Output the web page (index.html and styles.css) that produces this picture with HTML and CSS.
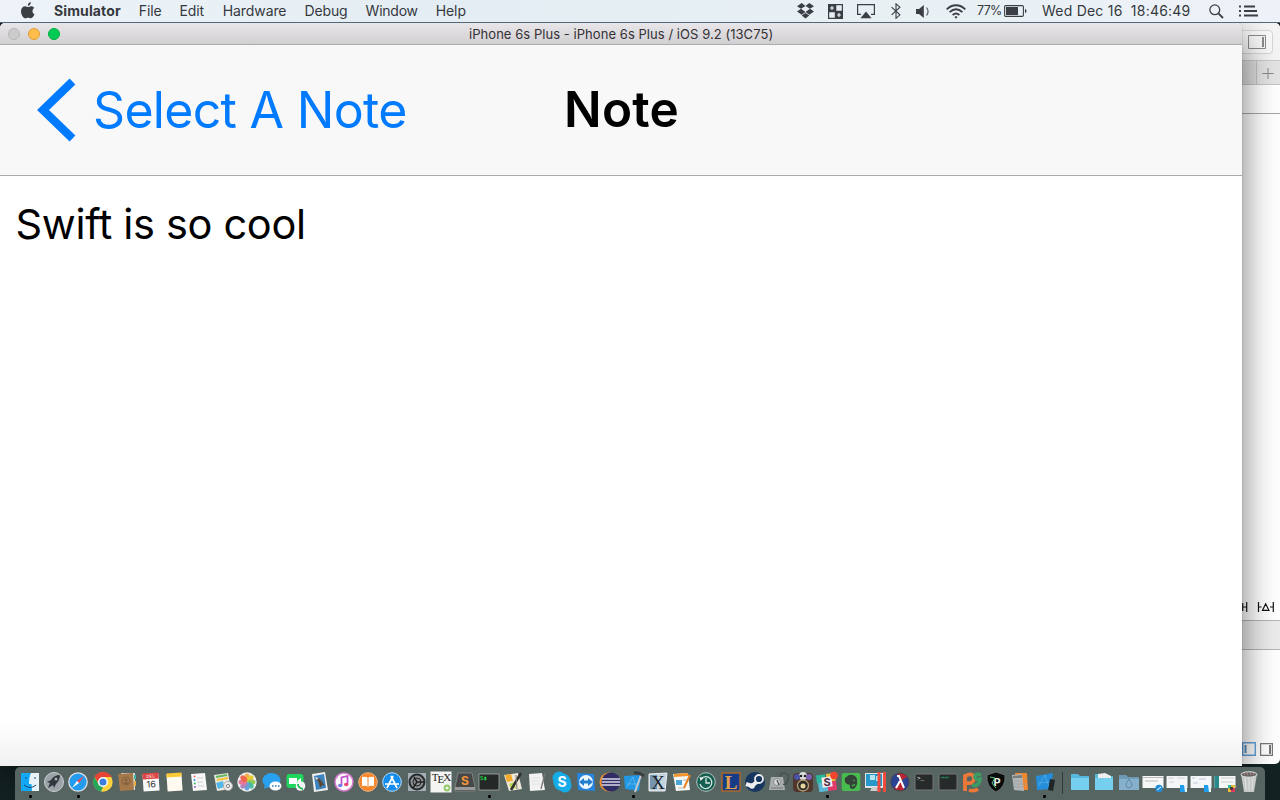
FILE: index.html
```html
<!DOCTYPE html>
<html lang="en">
<head>
<meta charset="utf-8">
<title>Simulator</title>
<link rel="stylesheet" href="styles.css">
</head>
<body>
<header class="menubar">
  <nav class="menus">
    <svg class="apple" width="14" height="17" viewBox="0 0 14 17"><path fill="#3b3f44" d="M9.8 0C8 .3 6.700 2 6.900 3.900 8.700 3.800 9.900 2 9.800 0zM7.200 5C6.500 5 5.500 4.200 4.200 4.200 1.800 4.200 0 6.200 0 9.200 0 12.800 2.400 16.300 4.300 16.300c1 0 1.600-.6 2.800-.6s1.700.6 2.800.6c1.600 0 3-2.400 3.600-4.200-2.600-1.200-2.600-4.900-.2-6.200C12.500 4.700 11.200 4.200 10.100 4.200 8.900 4.200 8 5 7.200 5z"/></svg>
    <span class="m app">Simulator</span><span class="m file">File</span><span class="m edit">Edit</span><span class="m hardware">Hardware</span><span class="m debug">Debug</span><span class="m window-menu">Window</span><span class="m">Help</span>
  </nav>
  <div class="status">
    <svg width="17" height="16" viewBox="0 0 17 16" fill="#3b3f44"><path d="M4.700 0 8.500 2.900 4 5.800 0 3.200zM12.300 0 8.500 2.900 13 5.800 17 3.200zM0 8.400 4 5.800 8.500 8.900 4.700 11.700zM17 8.400 13 5.800 8.500 8.900 12.300 11.700zM4.700 12.600 8.500 9.900 12.300 12.600 8.500 15.500z"/></svg>
    <svg class="s2" width="15" height="15" viewBox="0 0 15 15"><path fill="#3b3f44" d="M0 0h15v15H0z"/><path fill="#e6eef4" d="M8.300 1.200h5.500v5.600H8.300zM1.200 8.300h5.600v5.500H1.200z"/><path stroke="#e6eef4" stroke-width="1.200" d="M2 4h4M4 2v4M9 11h4M11 9v4"/></svg>
    <svg class="s3" width="18" height="15" viewBox="0 0 18 15"><path fill="none" stroke="#3b3f44" stroke-width="1.200" d="M4 10.400H.6V.6h16.800v9.800H14"/><path fill="#3b3f44" d="M9 7.500l5.500 6.800h-11z"/></svg>
    <svg class="s4" width="10" height="16" viewBox="0 0 10 16"><path fill="none" stroke="#3b3f44" stroke-width="1.100" d="M.6 4.200l8.300 7.600L5 15.300V.8l3.900 3.400-8.300 7.600"/></svg>
    <svg class="s5" width="13" height="13" viewBox="0 0 13 13"><path fill="#3b3f44" d="M0 4h3l4.800-4v13L3 9H0z"/><path fill="none" stroke="#596067" stroke-width="1.200" d="M10.500 2.500c2 2.500 2 5.500 0 8"/></svg>
    <svg class="s6" width="20" height="15" viewBox="0 0 20 15" fill="none" stroke="#3b3f44" stroke-width="1.800"><path d="M.7 5.300c5.500-5.400 13.100-5.400 18.600 0M3.600 8.200c4-3.700 8.800-3.700 12.800 0M6.600 11c2.200-1.900 4.600-1.900 6.800 0"/><circle cx="10" cy="13.300" r=".8" fill="#3b3f44" stroke-width="1"/></svg>
    <span class="pct">77%</span>
    <svg class="batt" width="23" height="12" viewBox="0 0 23 12"><rect x=".6" y=".6" width="18.800" height="10.800" rx="1.200" fill="none" stroke="#3b3f44" stroke-width="1.100"/><path fill="#3b3f44" d="M2 2h12v8H2zM21 3.800c2 .8 2 3.600 0 4.400z"/></svg>
    <span class="clock">Wed Dec 16&nbsp; 18:46:49</span>
    <svg class="search" width="15" height="15" viewBox="0 0 15 15" fill="none" stroke="#3b3f44" stroke-width="1.300"><circle cx="5.800" cy="5.800" r="4.900"/><path stroke-width="1.800" d="M9.400 9.400l4.600 4.600"/></svg>
    <svg class="list" width="19" height="12" viewBox="0 0 19 12"><path stroke="#3b3f44" stroke-width="2" d="M0 1.500h2M5 1.500h11M0 6h2M5 6h13M0 10.500h2M5 10.500h14"/></svg>
  </div>
</header>

<section class="xcode-window">
  <div class="x-toolbar"><span class="x-button"><svg width="18" height="14" viewBox="0 0 18 14"><path fill="none" stroke="#8c8c8c" d="M.5.5h17v13H.5z"/><path fill="#8c8c8c" d="M14 2h2v10h-2z"/></svg></span></div>
  <div class="x-tabs"><svg width="12" height="12" viewBox="0 0 12 12"><path stroke="#888" d="M.5 6.500h11M6 1v11"/></svg></div>
  <div class="x-jump"></div>
  <div class="x-canvas"><svg width="38" height="12" viewBox="0 0 38 12" fill="none" stroke="#111" stroke-width="1.200"><path d="M.7 2v8M1 6h3.500M4.700 1v10M16.500 1v10M16.500 6h3M20.500 9.300l3.200-6.500 3.200 6.500zM28 6h3M31.300 1v10"/></svg></div>
  <div class="x-debug"></div>
  <div class="x-bottom">
    <svg width="14" height="14" viewBox="0 0 14 14"><path fill="none" stroke="#63a2de" stroke-width="1.500" d="M.7.700h12.600v12.600H.7z"/><path stroke="#568fc5" stroke-width="2" d="M3.500 3v8"/></svg>
    <svg width="13" height="13" viewBox="0 0 13 13"><path fill="none" stroke="#777" stroke-width="1.200" d="M.6.600h11.800v11.800H.6z"/><path stroke="#777" stroke-width="2" d="M10 2v9"/></svg>
  </div>
</section>

<main class="simulator">
  <div class="titlebar"><i class="light gray"></i><i class="light amber"></i><i class="light green"></i><span class="title">iPhone 6s Plus - iPhone 6s Plus / iOS 9.2 (13C75)</span></div>
  <div class="navbar">
    <div class="back"><svg width="39" height="64" viewBox="0 0 39 64"><path fill="none" stroke="#007aff" stroke-width="8.300" d="M35.500 3.500 6 32l29.500 28.500"/></svg><span class="back-label">Select A Note</span></div>
    <h1 class="nav-title">Note</h1>
  </div>
  <p class="note">Swift is so cool</p>
</main>

<footer class="dock">
  <span class="item running"><svg viewBox="0 0 24 24"><path fill="#12a8f5" d="M3 3h18v18H3z"/><path fill="#e9f2f8" d="M13 3h8v18h-7l-.5-7H11q0-7 2-11z"/><path stroke="#174a73" d="M6 15q6 5 12 0M8 7v2M17 7v2"/></svg></span>
  <span class="item"><svg viewBox="0 0 24 24"><circle cx="12" cy="12" r="9.500" fill="#9ba3a8" stroke="#c9ced0"/><path fill="#31383d" d="M18 5q-6 0-9 5l-4 2 3 1-2 5 5-3 1 3 2-4q4-4 4-9z"/><circle cx="14" cy="9" r="1.500" fill="#aaa"/></svg></span>
  <span class="item running"><svg viewBox="0 0 24 24"><circle cx="12" cy="12" r="9.200" fill="#239cef" stroke="#dce1e5" stroke-width="1.300"/><path fill="#f44" d="M18 6l-7 5 2 2z"/><path fill="#fff" d="M6 18l5-7 2 2z"/></svg></span>
  <span class="item"><svg viewBox="0 0 24 24"><circle cx="12" cy="12" r="9.700" fill="#ffd23d"/><path fill="#e74436" d="M3.500 7a9.700 9.700 0 0 1 17 0H12l-4 7z"/><path fill="#26a65b" d="M3.500 7 8 15l4 2-2 4.500A9.700 9.700 0 0 1 3.500 7z"/><circle cx="12" cy="12" r="4.300" fill="#397fe0" stroke="#fff" stroke-width="1.500"/></svg></span>
  <span class="item"><svg viewBox="0 0 24 24"><path fill="#ddd" d="M6 3h14v17H6z"/><path fill="#3db6a3" d="M19 5h2v4h-2z"/><path fill="#e6ad3e" d="M19 11h2v5h-2z"/><path fill="#a5784a" d="M3 4l15-1 1 17-14 1z"/><circle cx="11" cy="11" r="4" fill="none" stroke="#866140"/><circle cx="11" cy="10" r="1.500" fill="#866140"/><path fill="#866140" d="M8 14q3-4 6 0z"/></svg></span>
  <span class="item"><svg viewBox="0 0 24 24"><g transform="rotate(-4 12 12)"><path fill="#fafafa" d="M4 4h16v17H4z"/><path fill="#df4545" d="M4 3h16v6H4z"/><text x="12" y="7.700" class="cal-month">DEC</text><text x="12" y="17.500" class="cal-day">16</text></g></svg></span>
  <span class="item"><svg viewBox="0 0 24 24"><g transform="rotate(-4 12 12)"><path fill="#fffaf0" d="M4 4h15v17H4z"/><path fill="#fac933" d="M4 3h15v4H4z"/></g></svg></span>
  <span class="item"><svg viewBox="0 0 24 24"><path fill="#f8f8f8" d="M4 4l14-1 2 17-14 1z"/><path stroke="#ccc" d="M10 8h6M10 12h6M11 16h6"/><circle cx="7.500" cy="6.500" r="1" fill="#e67"/><circle cx="7.500" cy="10" r="1" fill="#2b9be0"/><circle cx="7.800" cy="13.500" r="1" fill="#29c36a"/><circle cx="8" cy="17" r="1" fill="#a45dd1"/></svg></span>
  <span class="item"><svg viewBox="0 0 24 24"><path fill="#e8e8df" d="M3 5l14-2 3 16-14 2z"/><path fill="#52b8e8" d="M5 13l7-2 1 6-6 2z"/><path stroke="#f8bf38" stroke-width="2" d="M6 10l11-2"/><path stroke="#66b65d" stroke-width="2" d="M5 7l11-2"/><circle cx="17" cy="16" r="4.500" fill="#eee" stroke="#aaa"/><circle cx="17" cy="16" r="1.700" fill="none" stroke="#888"/></svg></span>
  <span class="item"><svg viewBox="0 0 24 24"><circle cx="12" cy="12" r="9.700" fill="#eee"/><g opacity=".9"><ellipse cx="12" cy="7.500" rx="2.600" ry="4" fill="#f5a335"/><ellipse cx="12" cy="7.500" rx="2.600" ry="4" fill="#e7ca22" transform="rotate(45 12 12)"/><ellipse cx="12" cy="7.500" rx="2.600" ry="4" fill="#8bc447" transform="rotate(90 12 12)"/><ellipse cx="12" cy="7.500" rx="2.600" ry="4" fill="#36b996" transform="rotate(135 12 12)"/><ellipse cx="12" cy="7.500" rx="2.600" ry="4" fill="#529bd8" transform="rotate(180 12 12)"/><ellipse cx="12" cy="7.500" rx="2.600" ry="4" fill="#a779b9" transform="rotate(225 12 12)"/><ellipse cx="12" cy="7.500" rx="2.600" ry="4" fill="#e66c91" transform="rotate(270 12 12)"/><ellipse cx="12" cy="7.500" rx="2.600" ry="4" fill="#ef583c" transform="rotate(315 12 12)"/></g></svg></span>
  <span class="item"><svg viewBox="0 0 24 24"><ellipse cx="11.500" cy="10.500" rx="9" ry="7.500" fill="#28a2ee"/><path fill="#28a2ee" d="M5 14l-1 5 6-3z"/><ellipse cx="15.500" cy="16" rx="6" ry="4.600" fill="#fff"/><path stroke="#277ab4" stroke-width="1.600" stroke-dasharray="1.500 1.500" d="M12 16h8"/></svg></span>
  <span class="item"><svg viewBox="0 0 24 24"><rect x="2.500" y="4" width="17" height="14" rx="3" fill="#1fd65c"/><path fill="#fff" d="M5 8h8v6H5zM13 11l4-3v6z"/><circle cx="16.500" cy="16" r="4.800" fill="#f5f5f5"/><path stroke="#22bd56" stroke-width="1.800" d="M14 14q0 4 5 5"/></svg></span>
  <span class="item"><svg viewBox="0 0 24 24"><path fill="#eee" d="M4 4l13-2 3 18-14 2z"/><path fill="#3d83bd" d="M6 6l10-2 2 14-10 2z"/><path fill="#5b4535" d="M7 7l5 2 5 7-3-1-2 3-1-5z"/><path fill="#fff" d="M7 7l3 1-1 2z"/></svg></span>
  <span class="item"><svg viewBox="0 0 24 24"><circle cx="12" cy="12" r="9" fill="#fbfbfb" stroke="#d77bcf" stroke-width="1.500"/><path stroke="#c14fc9" stroke-width="1.700" d="M9.500 15V7.500l6-1.500v8"/><ellipse cx="8.200" cy="15.500" rx="2.200" ry="1.800" fill="#777be8"/><ellipse cx="14.200" cy="14.500" rx="2.200" ry="1.800" fill="#ed4676"/></svg></span>
  <span class="item"><svg viewBox="0 0 24 24"><circle cx="12" cy="12" r="9.300" fill="#f8862c" stroke="#efb581"/><path fill="#fff" d="M6 7q4-1 6 1 2-2 6-1v9q-4-1-6 1-2-2-6-1z"/><path stroke="#ee8735" d="M12 8v9"/></svg></span>
  <span class="item"><svg viewBox="0 0 24 24"><circle cx="12" cy="12" r="9.300" fill="#168dec" stroke="#b5ddf7"/><path stroke="#fff" stroke-width="1.700" d="M7 18l6-12M11 6l6 12M5 14h14"/></svg></span>
  <span class="item"><svg viewBox="0 0 24 24"><path fill="#a3adb5" d="M3 3h18v18H3z"/><circle cx="12" cy="12" r="7.500" fill="#8a8f92" stroke="#282c2e" stroke-width="2"/><circle cx="12" cy="12" r="4" fill="none" stroke="#222"/><path stroke="#222" stroke-width="1.500" d="M12 12l-3-5M12 12h7M12 12l-4 6"/></svg></span>
  <span class="item"><svg viewBox="0 0 24 24"><path fill="#f4f5f2" d="M1.500 1.500h21v21h-21z"/><text x="12" y="11" class="tex">T<tspan dy="2">E</tspan><tspan dy="-2">X</tspan></text><circle cx="18" cy="18" r="2.500" fill="#e5f3d8" stroke="#94c66a" stroke-width="1.800"/></svg></span>
  <span class="item"><svg viewBox="0 0 24 24"><path fill="#474747" stroke="#8b8b8b" stroke-width=".8" d="M5 3h14l3 14v4H2v-4z"/><path fill="#9a9a9a" d="M2 17h20v3H2z"/><text x="12" y="14.500" class="letter sublime">S</text></svg></span>
  <span class="item running"><svg viewBox="0 0 24 24"><path fill="#242826" stroke="#a5aaa6" stroke-width=".8" d="M2 4h20v16H2z"/><text x="3" y="10" class="prompt green-text">$▮</text></svg></span>
  <span class="item"><svg viewBox="0 0 24 24"><path fill="#eee7d8" d="M3 5l14-2 4 16-13 2z"/><path fill="#f4ac2d" d="M4 5l6-1 2 7-6 1z"/><path fill="#b6d84d" d="M8 14l5-2 2 6-5 1z"/><path stroke="#303030" stroke-width="2.500" d="M20 3L10 20"/><path stroke="#777" d="M15 5l1 14"/></svg></span>
  <span class="item"><svg viewBox="0 0 24 24"><path fill="#f2f2f2" d="M4 4l13-1 3 17-15 1z"/><path stroke="#e2e2e2" d="M6 8h9M6 11h9M7 14h9"/><path stroke="#777" stroke-width="1.300" d="M20 3l-4 16"/></svg></span>
  <span class="item"><svg viewBox="0 0 24 24"><circle cx="9" cy="8" r="6.500" fill="#16ace8"/><circle cx="15" cy="16" r="6.500" fill="#16ace8"/><circle cx="12" cy="12" r="8.700" fill="#16ace8"/><text x="12" y="17" class="letter skype">S</text></svg></span>
  <span class="item"><svg viewBox="0 0 24 24"><path fill="#2584df" d="M3 3l17 1 1 17-17-1z"/><circle cx="12" cy="12" r="7" fill="#eff8ff"/><path fill="#237dce" d="M5 12l5-4v2.500h4V8l5 4-5 4v-2.500h-4V16z"/></svg></span>
  <span class="item"><svg viewBox="0 0 24 24"><circle cx="11" cy="12" r="9.500" fill="#eb9035"/><circle cx="13" cy="12" r="9.500" fill="#302c65"/><path stroke="#d8d7e9" stroke-width="1.500" d="M4 9h18M4 12h18M4 15h18"/></svg></span>
  <span class="item running"><svg viewBox="0 0 24 24"><path fill="#2297e3" d="M2 6l17-1-2 16-14-2z"/><path stroke="#63b9ee" stroke-width=".8" d="M5 17l6-10 3 10M5 14h10"/><path stroke="#c6c8c9" stroke-width="2" d="M19 5l-6 17"/><path stroke="#363c40" stroke-width="3" d="M12 3q5-1 10 3"/></svg></span>
  <span class="item"><svg viewBox="0 0 24 24"><path fill="#c4d4df" stroke="#eee" d="M3 4l18-1-2 18H3z"/><path fill="#7594ad" d="M4 5h7v14H4z"/><text x="12" y="18.500" class="letter x-letter">X</text></svg></span>
  <span class="item"><svg viewBox="0 0 24 24"><path fill="#f7f7f5" d="M3 4l15-1 2 17-14 1z"/><path fill="#f3942d" d="M4 4l14-1v3L4 7z"/><path fill="#4aa5da" d="M6 10h6v5H6z"/><path stroke="#bbb" d="M8 18h7M13 10h4"/><path stroke="#e88324" stroke-width="2" d="M20 5l-6 13"/></svg></span>
  <span class="item"><svg viewBox="0 0 24 24"><circle cx="12" cy="12" r="9.300" fill="#155f50" stroke="#b6c4c0"/><path stroke="#d8e6e1" stroke-width="1.300" d="M7 9a6 6 0 1 1-1 5M12 8v5h4"/><path fill="#eee" d="M5.500 7l4 1-3 3z"/></svg></span>
  <span class="item"><svg viewBox="0 0 24 24"><path fill="#163c88" stroke="#a9652d" stroke-width="1.500" d="M3 3h18v18H3z"/><text x="12" y="19" class="letter gold">L</text></svg></span>
  <span class="item"><svg viewBox="0 0 24 24"><circle cx="12" cy="12" r="10" fill="#17365f"/><path stroke="#eee" stroke-width="4" d="M3 14l6 2 7-6"/><circle cx="16" cy="9" r="4" fill="#17365f" stroke="#eee" stroke-width="1.800"/><circle cx="9" cy="16" r="2.800" fill="#eee"/></svg></span>
  <span class="item"><svg viewBox="0 0 24 24"><path fill="#a8adaf" d="M4 7h12l2 13H2z"/><circle cx="10" cy="12" r="3.500" fill="#d7dadb" stroke="#888"/><path stroke="#454b4c" stroke-width="1.200" d="M12 15l-2-5M13 7q0-5 5-4t3 7-5 4"/><path stroke="#777" d="M4 18h12"/></svg></span>
  <span class="item"><svg viewBox="0 0 24 24"><rect x="2" y="3" width="20" height="19" rx="4" fill="#50362c"/><circle cx="12" cy="6" r="4" fill="#ddd"/><circle cx="6" cy="7" r="3" fill="#4853a7"/><circle cx="18" cy="7" r="3" fill="#7960b2"/><circle cx="10" cy="6" r="1.300" fill="#222"/><circle cx="14" cy="6" r="1.300" fill="#222"/><circle cx="12" cy="15.500" r="5.500" fill="#302d29" stroke="#b3a178" stroke-width="1.300"/><circle cx="12" cy="16" r="2.500" fill="#ead6a0"/></svg></span>
  <span class="item running"><svg viewBox="0 0 24 24"><g transform="rotate(-8 12 12)"><path fill="#2bb89a" d="M2 4h9v8H2z"/><path fill="#eabb35" d="M12 4h9v8h-9z"/><path fill="#e33b69" d="M12 12h9v9h-9z"/><path fill="#5bb9d5" d="M3 12h9v9H3z"/><path fill="#f6eef2" d="M7 7h10v10H7z"/></g><text x="12" y="16" class="letter slack">S</text><circle cx="19" cy="5.500" r="3.800" fill="#f34432"/></svg></span>
  <span class="item"><svg viewBox="0 0 24 24"><rect x="2.700" y="3" width="18.600" height="18" rx="2" fill="#47bb4e"/><path fill="#344239" d="M6 8l4-3q6-1 8 4 1 8-4 10-4 0-3-4l-3-1q-3-2-2-6z"/><path stroke="#47bb4e" stroke-width="1.300" d="M13.500 16.500q0-2 2.500-1.500"/><circle cx="15" cy="10.500" r=".8" fill="#47bb4e"/></svg></span>
  <span class="item"><svg viewBox="0 0 24 24"><path fill="#e2e5e7" d="M1 3h19v15H1z"/><path fill="#2598cb" d="M2 4h16v12H2z"/><path fill="#b5e5ee" d="M6 5h5v5H6zM12 6h4v5h-4z"/><path fill="#ccc" d="M8 17h5l1 4H6z"/><path stroke="#ef4b3e" stroke-width="3" d="M15 2v20M20.500 2v20"/></svg></span>
  <span class="item"><svg viewBox="0 0 24 24"><circle cx="12" cy="12" r="9" fill="#b92530" stroke="#444"/><path fill="#294292" d="M9 3.500a9 9 0 0 0-3 15L12 12z"/><path fill="#294292" d="M16 20a9 9 0 0 0 3-13l-5 3z"/><path stroke="#fff" stroke-width="2" d="M9 6h2l5 12M12 11l-4 7"/></svg></span>
  <span class="item"><svg viewBox="0 0 24 24"><path fill="#262a2b" stroke="#777" d="M3 4h18v16H3z"/><text x="5" y="9.500" class="prompt">&gt;_</text></svg></span>
  <span class="item"><svg viewBox="0 0 24 24"><path fill="#262a2b" stroke="#777" d="M3 4h18v16H3z"/><path stroke="#248c58" stroke-width="1.500" stroke-dasharray="1.500 .5" d="M5 7.500h8"/></svg></span>
  <span class="item"><svg viewBox="0 0 24 24"><path stroke="#ee7837" stroke-width="3.800" d="M5 21V6q8-4 9 2 0 6-7 5"/><path stroke="#ee7837" stroke-width="3.500" d="M9 20q5 2 9-1"/><path stroke="#3d9c61" stroke-width="3.500" d="M21 5q-6-2-6 2 0 3 5 2-1 8-8 6"/></svg></span>
  <span class="item"><svg viewBox="0 0 24 24"><path fill="#090c0b" stroke="#7a827e" stroke-width=".7" d="M12 2l9 3q1 12-9 17Q2 17 3 5z"/><text x="13" y="16" class="letter shield">P</text><path stroke="#5dca75" d="M6 7l5 1-3 5 4 5"/></svg></span>
  <span class="item"><svg viewBox="0 0 24 24"><path fill="#f0872c" d="M7 3h12l1 17H8z"/><path fill="#b2b6b8" d="M4 5l10-1 2 17-10-1z"/><path fill="#777d80" d="M5 6l9-1v3H5z"/><path stroke="#989da0" stroke-width=".7" d="M6 11h8M6 14h9M6 17h9M16 9h3M16 14h3"/></svg></span>
  <span class="item running"><svg viewBox="0 0 24 24"><path fill="#258eda" d="M3 6l17-3-2 16-14 1z"/><path stroke="#62b5e9" stroke-width=".6" d="M6 16l6-11 4 12M5 13l13-1"/><path fill="#202527" d="M17 9l5 1-2 11-5-1z"/></svg></span>
  <span class="separator"></span>
  <span class="item"><svg viewBox="0 0 24 24"><path fill="#58b9df" d="M3 4h7l2 2h9v14H3z"/><path fill="#77cfef" d="M3 8h18v12H3z"/></svg></span>
  <span class="item"><svg viewBox="0 0 24 24"><path fill="#58b9df" d="M3 4h7l2 2h9v14H3z"/><path fill="#eee" d="M6 4l7-1 6 3v4H6z"/><path fill="#77cfef" d="M3 8h18v12H3z"/></svg></span>
  <span class="item"><svg viewBox="0 0 24 24"><path fill="#6d9ab8" d="M2 5h7l2 2h11v13H2z"/><path fill="#86b0cc" d="M2 9h20v11H2z"/><path stroke="#5d8aac" d="M12 9q-6 8 0 9 6-1 0-9z"/></svg></span>
  <span class="item"><svg viewBox="0 0 24 24"><path fill="#f7f7f7" d="M1.500 6h21v12h-21z"/><path stroke="#b8b8b8" d="M2 7.500h20M4 11h13"/><circle cx="18" cy="18.500" r="3.700" fill="#238edc"/><path stroke="#fff" d="M16 20l4-3"/></svg></span>
  <span class="item"><svg viewBox="0 0 24 24"><path fill="#f5f6f7" d="M1.500 6h21v12h-21z"/><path stroke="#c0ccd5" stroke-width=".8" d="M3 8h6M12 8h8M4 12h5"/><path fill="#209cec" d="M15 15h7v7h-7z"/><path fill="#e9f5fc" d="M19 15h3v7h-2z"/></svg></span>
  <span class="item"><svg viewBox="0 0 24 24"><path fill="#f5f6f7" d="M1.500 6h21v12h-21z"/><path stroke="#a8bfd8" stroke-width=".8" d="M3 8h3M10 9h7M4 13h5"/><path fill="#209cec" d="M15 15h7v7h-7z"/><path fill="#e9f5fc" d="M19 15h3v7h-2z"/></svg></span>
  <span class="item"><svg viewBox="0 0 24 24"><path fill="#f5f6f7" d="M1.500 6h21v12h-21z"/><path fill="#27898a" d="M1.500 6H6v12H1.500z"/><path stroke="#ccc" d="M8 8h13M8 12h12"/><path fill="#edbb38" d="M15 15h7v7h-7z"/><path fill="#df3c6a" d="M18 18h4v4h-4z"/><path fill="#2bb89a" d="M15 15h3v3h-3z"/><circle cx="18.500" cy="18.500" r="1.700" fill="#40383e"/></svg></span>
  <span class="item"><svg viewBox="0 0 24 24"><path fill="#c4c9c8" d="M4 4h16l-3 18H7z"/><ellipse cx="12" cy="4.500" rx="8" ry="2.700" fill="#666" stroke="#e2e4e3"/><path stroke="#dfe2e1" d="M8 8l1 12M12 8v12M16 8l-1 12"/><path stroke="#b67878" stroke-width="2" stroke-dasharray="1 2" d="M7 4h10"/></svg></span>
</footer>
</body>
</html>
```

FILE: styles.css
```css
* { box-sizing: border-box; }
body {
  margin: 0;
  width: 1280px;
  height: 800px;
  overflow: hidden;
  position: relative;
  background: #132322;
  color: #35393e;
  font-family: Inter, "Liberation Sans", sans-serif;
}
svg { display: block; flex: none; }
.menubar {
  position: relative;
  z-index: 2;
  display: flex;
  justify-content: space-between;
  height: 23px;
  background: linear-gradient(90deg, #edf3f8, #e4edf3 35%, #e8f0f4 70%, #edf2f8);
  border-bottom: 1px solid #526878;
  font-size: 14px;
  line-height: 22px;
  white-space: nowrap;
}
.menus { display: flex; padding-left: 21px; }
.apple { margin: 2px 19px 0 0; }
.m { margin-right: 18px; letter-spacing: -.1px; }
.app { font-weight: 700; letter-spacing: .12px; }
.edit { margin-right: 18.700px; }
.window-menu { letter-spacing: -.25px; }
.status { display: flex; align-items: center; padding-right: 22px; }
.s2 { margin-left: 14px; }
.s3 { margin-left: 14px; }
.s4 { margin-left: 16px; }
.s5 { margin-left: 15px; }
.s6 { margin-left: 17px; }
.pct { width: 24px; margin-left: 11px; font-size: 12.500px; letter-spacing: -.65px; }
.batt { margin-left: 3px; }
.clock { width: 149px; margin-left: 15px; letter-spacing: .22px; }
.search { margin-left: 18px; }
.list { margin-left: 15px; }

/* Window behind, visible at the right edge */
.xcode-window {
  position: absolute;
  left: 1100px;
  top: 23px;
  width: 180px;
  height: 741px;
  display: flex;
  flex-direction: column;
  background: #fff;
  border-radius: 5px;
  overflow: hidden;
}
.x-toolbar { height: 38px; padding: 7px 7px 0; display: flex; justify-content: flex-end; background: #f5f5f5; border-bottom: 1px solid #c9c9c9; }
.x-button { width: 55px; height: 24px; display: flex; justify-content: flex-end; padding: 4px 6px; border: 1px solid #d7d7d7; border-radius: 4px; background: #fafafa; }
.x-tabs { height: 24px; padding: 6px 6px 0 0; display: flex; justify-content: flex-end; background: linear-gradient(90deg, #dedede 156px, #c3c3c3 156px, #c3c3c3 157px, #e4e4e4 157px); border-bottom: 1px solid #c4c4c4; }
.x-jump { height: 29px; border-bottom: 1px solid #a7a7a7; }
.x-canvas { flex: 1; display: flex; align-items: flex-end; justify-content: flex-end; padding: 0 0 7px; }
.x-debug { height: 30px; background: #ececec; border: solid #b5b5b5; border-width: 1px 0; }
.x-bottom { height: 114px; display: flex; justify-content: flex-end; align-items: flex-end; gap: 4px; padding: 0 7px 8px; }

.simulator {
  position: absolute;
  left: 0;
  top: 23px;
  width: 1242px;
  height: 743px;
  border-radius: 5px 5px 0 0;
  overflow: hidden;
  background: linear-gradient(#fff 700px, #f0f0f0);
  box-shadow: 0 0 1px rgba(0,0,0,.65), 0 12px 36px rgba(0,0,0,.54);
}
.titlebar {
  height: 22px;
  display: flex;
  align-items: center;
  padding-left: 8px;
  gap: 8px;
  border-bottom: 1px solid #aeadae;
  background: linear-gradient(#e9e6e9, #d1cfd2);
}
.light { width: 12px; height: 12px; border-radius: 50%; border: 1px solid #b8b8b8; background: #cdcccd; }
.amber { background: #ffbd4c; border-color: #df9d34; }
.green { background: #00cb54; border-color: #00aa44; }
.title { margin-left: 401px; padding-top: 1px; font-size: 13px; letter-spacing: .05px; color: #333136; white-space: nowrap; }
.navbar { height: 131px; display: flex; background: #f8f8f8; border-bottom: 1px solid #aaa; }
.back { width: 564px; display: flex; align-items: center; padding: 0 0 1px 37px; color: #007aff; font-size: 50px; letter-spacing: -.7px; white-space: nowrap; }
.back-label { margin-left: 17px; }
.nav-title { margin: 0; font-size: 49.500px; line-height: 129px; font-weight: 600; color: #000; letter-spacing: .3px; }
.note { margin: 0; padding: 23px 0 0 15.500px; color: #000; font-size: 41.500px; line-height: 51px; letter-spacing: -.33px; }

.dock {
  position: absolute;
  left: 15px;
  top: 767px;
  width: 1250px;
  height: 33px;
  display: flex;
  padding: 3px 0 0 3px;
  border-radius: 5px 5px 0 0;
  background: #566462;
}
.item { width: 24.170px; flex: none; display: flex; flex-direction: column; align-items: center; }
.item svg { width: 24px; height: 24px; }
.item path:not([fill]) { fill: none; }
.running::after { content: ""; width: 3px; height: 3px; margin-top: 1px; border-radius: 1px; background: #050606; }
.separator { width: 1px; height: 22px; margin: 2px 5px 0 5.500px; background: #303b3a; }
.cal-month { font-size: 4px; fill: #fff; text-anchor: middle; }
.cal-day { font-size: 9px; fill: #333; text-anchor: middle; }
.tex { font: 11px "Liberation Serif", serif; text-anchor: middle; fill: #222; letter-spacing: -1px; }
.letter { font-weight: 700; text-anchor: middle; }
.sublime { font-size: 12px; fill: #f59336; }
.skype { font-size: 14px; fill: #fff; }
.x-letter { font: 19px "Liberation Serif", serif; fill: #18232c; }
.gold { font: bold 19px "Liberation Serif", serif; fill: #e2a14f; }
.slack { font-size: 11px; fill: #4a2d43; }
.shield { font-size: 11px; fill: #e6f4e9; }
.prompt { font: 6px "Liberation Mono", monospace; fill: #fff; }
.green-text { fill: #28df4a; }
```
